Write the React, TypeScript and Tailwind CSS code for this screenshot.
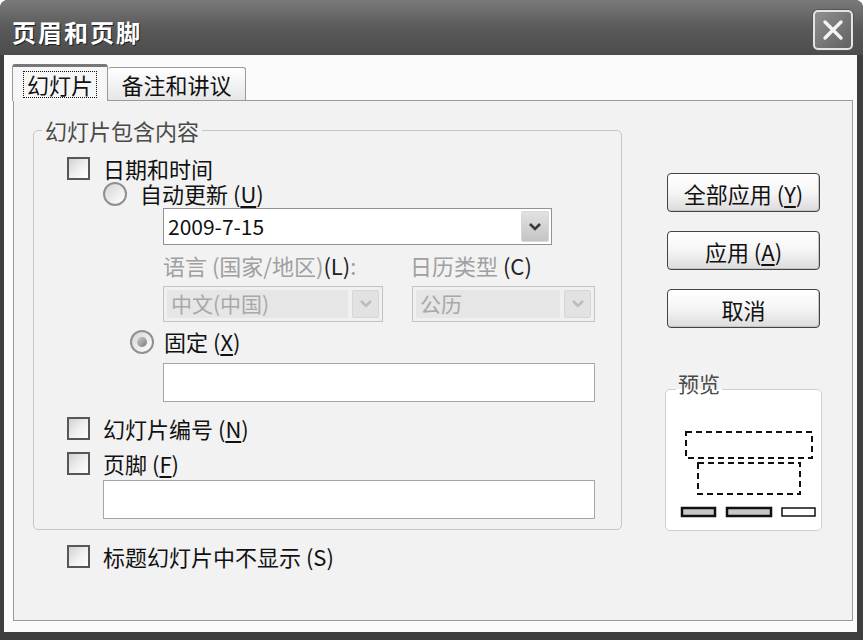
import React from 'react';

const Acc = ({ k }: { k: string }) => (
  <span>
    (<span className="underline underline-offset-[3px]">{k}</span>)
  </span>
);

function Chevron({ color }: { color: string }) {
  return (
    <svg width="14" height="10" viewBox="0 0 14 10">
      <polyline points="2,2 7,7 12,2" fill="none" stroke={color} strokeWidth="2.6" />
    </svg>
  );
}

function CheckBox() {
  return (
    <span className="w-[23px] h-[23px] shrink-0 border-2 border-[#575757] bg-linear-to-br from-[#d2d2d2] via-[#eeeeee] to-white" />
  );
}

function Radio({ checked }: { checked?: boolean }) {
  return (
    <span className="w-[24px] h-[24px] shrink-0 rounded-full border-2 border-[#909090] bg-linear-to-br from-[#d6d6d6] to-white flex items-center justify-center">
      {checked && <span className="w-[10px] h-[10px] rounded-full bg-linear-to-br from-[#cfcfcf] to-[#7c7c7c]" />}
    </span>
  );
}

function Button({ children }: { children: React.ReactNode }) {
  return (
    <button className="h-[39px] w-[153px] mx-[2px] rounded-[4px] border border-[#444] bg-linear-to-b from-white via-[#f5f5f5] to-[#dcdcdc] text-[22px] leading-none text-[#111] shadow-[inset_-1px_-1px_0_#c4c4c4]">
      {children}
    </button>
  );
}

function DisabledCombo({ text, width }: { text: string; width: string }) {
  return (
    <div className={`${width} h-[36px] border border-[#c2c2c2] bg-[#f0f0f0] p-[3px] flex gap-[4px]`}>
      <div className="flex-1 bg-[#e6e6e6] flex items-center pl-[4px] text-[21px] text-[#a8a8a8]">{text}</div>
      <div className="w-[27px] rounded-[2px] bg-[#e2e2e2] border border-[#d6d6d6] flex items-center justify-center">
        <Chevron color="#bdbdbd" />
      </div>
    </div>
  );
}

export default function App() {
  return (
    <div className="w-[863px] h-[640px] bg-white font-['Noto_Sans_CJK_SC','Noto_Sans',sans-serif]">
      <div className="w-full h-full rounded-t-[8px] overflow-hidden bg-[#3e3e3e] flex flex-col">
        {/* title bar */}
        <div className="h-[55px] shrink-0 flex items-start justify-between pl-[12px] pr-[10px] bg-linear-to-b from-[#7a7a7a] via-[#5a5a5a] to-[#4c4c4c]">
          <span className="mt-[17px] text-[24px] leading-[30px] font-bold tracking-[2px] text-white [text-shadow:1px_1px_0_#202020]">
            页眉和页脚
          </span>
          <div className="mt-[10px] w-[40px] h-[40px] rounded-[5px] border-2 border-[#e4e4e4] bg-linear-to-br from-[#909090] to-[#626262] flex items-center justify-center shadow-[0_0_0_1px_#555]">
            <svg width="22" height="22" viewBox="0 0 22 22">
              <path d="M3 3 L19 19 M19 3 L3 19" stroke="#f4f4f4" strokeWidth="3.4" strokeLinecap="round" />
            </svg>
          </div>
        </div>

        {/* body */}
        <div className="flex-1 ml-[4px] mr-[6px] mb-[8px] bg-[#fbfbfb] flex flex-col pt-[9px]">
          {/* tabs */}
          <div className="flex items-end pl-[8px] h-[37px] relative z-10">
            <div className="h-[37px] w-[96px] rounded-t-[3px] border border-[#9a9a9a] border-t-[3px] border-t-[#777] border-b-0 bg-[#f6f6f6] flex items-center justify-center">
              <span className="px-[3px] h-[27px] border border-dotted border-[#111] text-[22px] leading-[25px] text-[#111]">幻灯片</span>
            </div>
            <div className="h-[33px] w-[138px] mb-[1px] rounded-t-[3px] border border-[#9a9a9a] border-l-0 border-b-0 bg-linear-to-b from-white to-[#e6e6e6] flex items-center justify-center text-[22px] leading-none text-[#111]">
              备注和讲议
            </div>
          </div>

          {/* panel */}
          <div className="-mt-px ml-[9px] mr-[4px] mb-[11px] flex-1 border border-[#9a9a9a] bg-[#f2f2f2] flex pt-[15px] pl-[19px]">
            {/* left column */}
            <div className="w-[589px] flex flex-col text-[22px] text-[#111]">
              <fieldset className="w-[589px] border border-[#c6c6c6] rounded-[5px] pl-[33px] pb-[10px]">
                <legend className="-ml-[25px] px-[3px] leading-[28px] text-[#4a4a4a]">幻灯片包含内容</legend>
                <div className="mt-[12px] h-[25px] flex items-center gap-[13px]">
                  <CheckBox />
                  <span className="leading-[25px]">日期和时间</span>
                </div>
                <div className="ml-[36px] h-[25px] flex items-center gap-[13px]">
                  <Radio />
                  <span className="leading-[25px]">
                    自动更新 <Acc k="U" />
                  </span>
                </div>
                <div className="ml-[96px] mt-[2px] w-[389px] h-[37px] border border-[#929292] bg-white flex items-center pl-[4px] pr-[2px]">
                  <span className="flex-1 text-[21px] leading-none">2009-7-15</span>
                  <span className="w-[28px] h-[31px] rounded-[2px] bg-linear-to-b from-[#e2e2e2] to-[#c4c4c4] border border-[#d8d8d8] flex items-center justify-center">
                    <Chevron color="#3a3a3a" />
                  </span>
                </div>
                <div className="ml-[96px] mt-[6px] h-[28px] flex items-center leading-[28px]">
                  <span className="w-[247px] text-[#a0a0a0]">
                    语言 (国家/地区)<span className="text-[#222]">(L)</span>:
                  </span>
                  <span className="text-[#a0a0a0]">
                    日历类型 <span className="text-[#222]">(C)</span>
                  </span>
                </div>
                <div className="ml-[96px] mt-[7px] flex gap-[29px]">
                  <DisabledCombo text="中文(中国)" width="w-[220px]" />
                  <DisabledCombo text="公历" width="w-[183px]" />
                </div>
                <div className="ml-[63px] mt-[7px] h-[25px] flex items-center gap-[10px]">
                  <Radio checked />
                  <span className="leading-[25px]">
                    固定 <Acc k="X" />
                  </span>
                </div>
                <div className="ml-[96px] mt-[9px] w-[432px] h-[39px] border border-[#a6a6a6] bg-white" />
                <div className="mt-[14px] h-[25px] flex items-center gap-[13px]">
                  <CheckBox />
                  <span className="leading-[25px]">
                    幻灯片编号 <Acc k="N" />
                  </span>
                </div>
                <div className="mt-[10px] h-[25px] flex items-center gap-[13px]">
                  <CheckBox />
                  <span className="leading-[25px]">
                    页脚 <Acc k="F" />
                  </span>
                </div>
                <div className="ml-[36px] mt-[4px] w-[492px] h-[39px] border border-[#a6a6a6] bg-white" />
              </fieldset>
              <div className="ml-[34px] mt-[14px] h-[25px] flex items-center gap-[13px]">
                <CheckBox />
                <span className="leading-[25px]">标题幻灯片中不显示 (S)</span>
              </div>
            </div>

            {/* right column */}
            <div className="ml-[43px] w-[157px] flex flex-col">
              <div className="mt-[57px] flex flex-col gap-[19px]">
                <Button>
                  全部应用 <Acc k="Y" />
                </Button>
                <Button>
                  应用 <Acc k="A" />
                </Button>
                <Button>取消</Button>
              </div>
              <fieldset className="mt-[44px] w-[157px] border border-[#cfcfcf] rounded-[5px] bg-white">
                <legend className="ml-[10px] px-[2px] pb-[12px] text-[21px] leading-[22px] text-[#4a4a4a]">预览</legend>
                <svg width="155" height="124" viewBox="0 0 155 124" className="block">
                  <rect x="20" y="26" width="126" height="26" fill="none" stroke="#111" strokeWidth="2" strokeDasharray="6 4" />
                  <rect x="32" y="57" width="102" height="31" fill="none" stroke="#111" strokeWidth="2" strokeDasharray="6 4" />
                  <rect x="16" y="102" width="33" height="8" fill="#c8c8c8" stroke="#111" strokeWidth="2.5" />
                  <rect x="61" y="102" width="44" height="8" fill="#c8c8c8" stroke="#111" strokeWidth="2.5" />
                  <rect x="116" y="102" width="33" height="8" fill="#fff" stroke="#111" strokeWidth="1.5" />
                </svg>
              </fieldset>
            </div>
          </div>
        </div>
      </div>
    </div>
  );
}
